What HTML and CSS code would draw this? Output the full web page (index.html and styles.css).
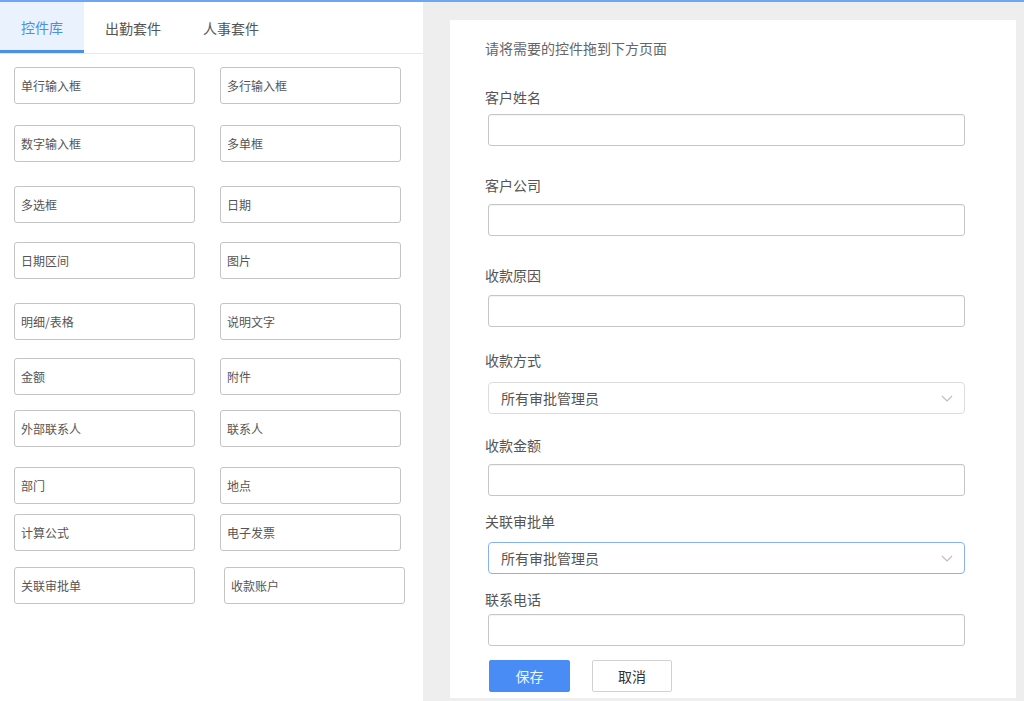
FILE: index.html
```html
<!DOCTYPE html>
<html lang="zh-CN">
<head>
<meta charset="utf-8">
<title>表单设计</title>
<link rel="stylesheet" href="styles.css">
</head>
<body>
<div class="app">
  <aside class="sidebar">
    <nav class="tabs">
      <div class="tab active">控件库</div>
      <div class="tab">出勤套件</div>
      <div class="tab">人事套件</div>
    </nav>
    <div class="widgets">
      <div class="wrow"><div class="widget">单行输入框</div><div class="widget">多行输入框</div></div>
      <div class="wrow"><div class="widget">数字输入框</div><div class="widget">多单框</div></div>
      <div class="wrow"><div class="widget">多选框</div><div class="widget">日期</div></div>
      <div class="wrow"><div class="widget">日期区间</div><div class="widget">图片</div></div>
      <div class="wrow"><div class="widget">明细/表格</div><div class="widget">说明文字</div></div>
      <div class="wrow"><div class="widget">金额</div><div class="widget">附件</div></div>
      <div class="wrow"><div class="widget">外部联系人</div><div class="widget">联系人</div></div>
      <div class="wrow"><div class="widget">部门</div><div class="widget">地点</div></div>
      <div class="wrow"><div class="widget">计算公式</div><div class="widget">电子发票</div></div>
      <div class="wrow"><div class="widget">关联审批单</div><div class="widget shifted">收款账户</div></div>
    </div>
  </aside>
  <main class="canvas">
    <div class="card">
      <p class="hint">请将需要的控件拖到下方页面</p>
      <div class="field"><div class="label">客户姓名</div><div class="input"></div></div>
      <div class="field"><div class="label">客户公司</div><div class="input"></div></div>
      <div class="field"><div class="label">收款原因</div><div class="input"></div></div>
      <div class="field"><div class="label">收款方式</div>
        <div class="select"><span>所有审批管理员</span>
          <svg class="chev" width="12" height="7" viewBox="0 0 12 7"><path d="M1 1 L6 6 L11 1" fill="none" stroke="#bdbdbd" stroke-width="1.1"/></svg>
        </div>
      </div>
      <div class="field"><div class="label">收款金额</div><div class="input"></div></div>
      <div class="field"><div class="label">关联审批单</div>
        <div class="select focused"><span>所有审批管理员</span>
          <svg class="chev" width="12" height="7" viewBox="0 0 12 7"><path d="M1 1 L6 6 L11 1" fill="none" stroke="#bdbdbd" stroke-width="1.1"/></svg>
        </div>
      </div>
      <div class="field"><div class="label">联系电话</div><div class="input"></div></div>
      <div class="actions">
        <button class="btn primary">保存</button>
        <button class="btn">取消</button>
      </div>
    </div>
  </main>
</div>
</body>
</html>
```
FILE: styles.css
```css
* { box-sizing: border-box; }
html, body { margin: 0; padding: 0; }
body {
  font-family: "Noto Sans CJK SC", "Noto Sans", sans-serif;
  color: #555;
  background: #fff;
}
.app {
  display: flex;
  height: 701px;
  border-top: 2px solid #6ea6f4;
  overflow: hidden;
}

/* Sidebar */
.sidebar {
  width: 423px;
  flex: none;
  background: #fff;
}
.tabs {
  display: flex;
  height: 52px;
  border-bottom: 1px solid #e8e8e8;
}
.tab {
  height: 51px;
  padding: 0 21px;
  display: flex;
  align-items: center;
  font-size: 14px;
  color: #555;
}
.tab.active {
  background: #e9f2fd;
  color: #4a90e6;
  border-bottom: 3px solid #4a8fe8;
  padding-top: 1px;
}
.widgets {
  padding: 13px 0 0 14px;
}
.wrow {
  display: flex;
  gap: 25px;
}
.wrow:nth-child(2) { margin-top: 21px; }
.wrow:nth-child(3) { margin-top: 24px; }
.wrow:nth-child(4) { margin-top: 19px; }
.wrow:nth-child(5) { margin-top: 24px; }
.wrow:nth-child(6) { margin-top: 18px; }
.wrow:nth-child(7) { margin-top: 15px; }
.wrow:nth-child(8) { margin-top: 20px; }
.wrow:nth-child(9) { margin-top: 10px; }
.wrow:nth-child(10) { margin-top: 16px; }
.widget {
  width: 181px;
  height: 37px;
  border: 1px solid #c4c4c4;
  border-radius: 3px;
  padding-left: 6px;
  display: flex;
  align-items: center;
  font-size: 12px;
  color: #555;
  background: #fff;
}
.widget.shifted { margin-left: 4px; }

/* Canvas */
.canvas {
  flex: 1;
  background: #eeeeee;
  padding: 18px 8px 0 27px;
}
.card {
  background: #fff;
  height: 678px;
  padding: 18px 51px 0 35px;
}
.hint {
  margin: 0;
  font-size: 14px;
  line-height: 20px;
  color: #666;
}
.label {
  font-size: 14px;
  line-height: 20px;
  color: #555;
}
.input, .select {
  margin-left: 3px;
  height: 32px;
  border-radius: 3px;
  background: #fff;
}
.input {
  border: 1px solid #c6c6c6;
  box-shadow: inset 0 1px 1px rgba(0,0,0,0.05);
}
.select {
  border: 1px solid #dddddd;
  border-radius: 4px;
  display: flex;
  align-items: center;
  justify-content: space-between;
  padding: 0 11px 0 12px;
  font-size: 14px;
  color: #555;
}
.select.focused { border-color: #86b2f2; }

.field:nth-child(2) { margin-top: 29px; }
.field:nth-child(2) .input { margin-top: 7px; }
.field:nth-child(3) { margin-top: 29px; }
.field:nth-child(3) .input { margin-top: 9px; }
.field:nth-child(4) { margin-top: 29px; }
.field:nth-child(4) .input { margin-top: 10px; }
.field:nth-child(5) { margin-top: 23px; }
.field:nth-child(5) .select { margin-top: 12px; }
.field:nth-child(6) { margin-top: 21px; }
.field:nth-child(6) .input { margin-top: 9px; }
.field:nth-child(7) { margin-top: 15px; }
.field:nth-child(7) .select { margin-top: 11px; }
.field:nth-child(8) { margin-top: 15px; }
.field:nth-child(8) .input { margin-top: 5px; }

.actions {
  margin: 14px 0 0 4px;
  display: flex;
  gap: 22px;
}
.btn {
  width: 80px;
  height: 32px;
  border: 1px solid #d2d2d2;
  border-radius: 2px;
  background: #fff;
  font-family: inherit;
  font-size: 14px;
  color: #333;
  padding: 0;
}
.btn.primary {
  width: 81px;
  background: #4a8cf5;
  border-color: #4a8cf5;
  color: #eef5ff;
}
```
